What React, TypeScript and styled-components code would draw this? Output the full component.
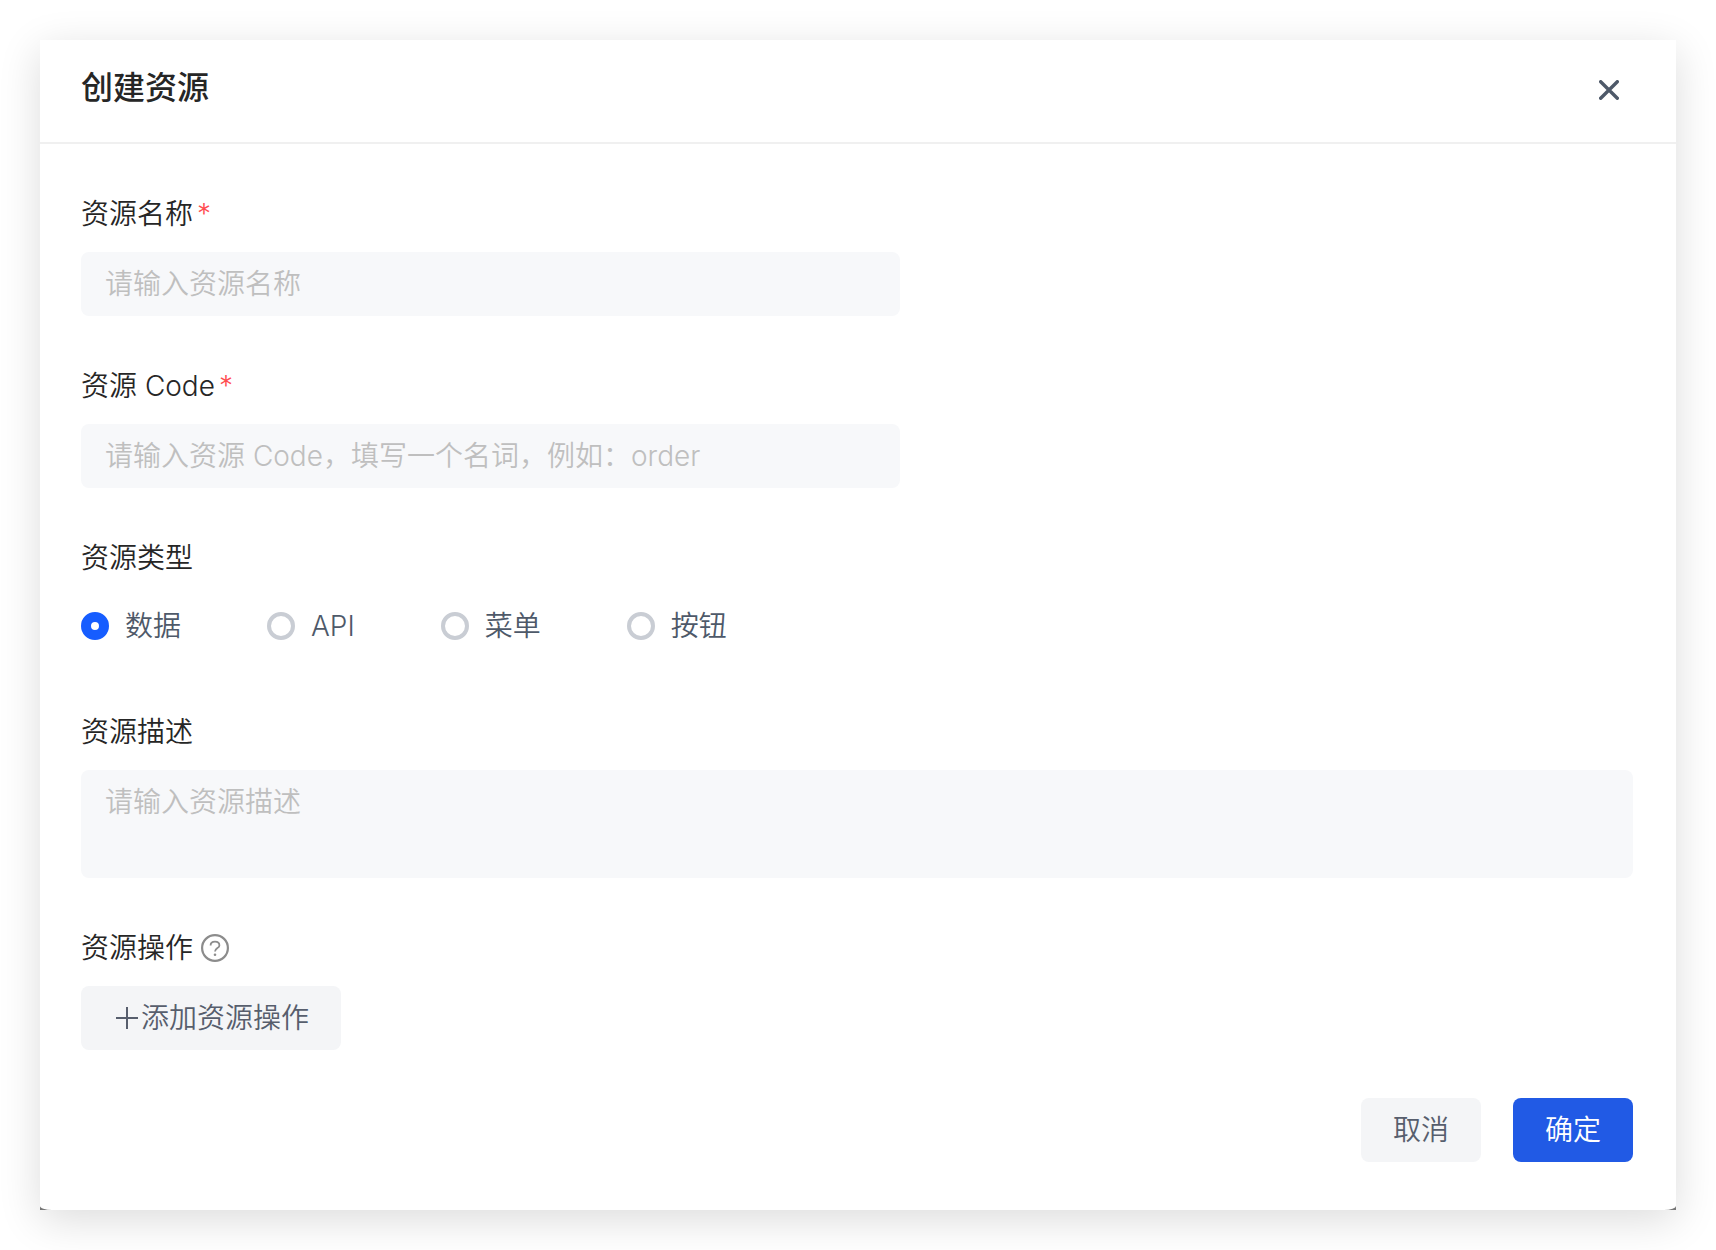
import React, { useState } from "react";
import styled, { createGlobalStyle } from "styled-components";

const GlobalStyle = createGlobalStyle`
  * { box-sizing: border-box; }
  body {
    margin: 0;
    background: #fff;
    font-family: Inter, "Noto Sans CJK SC", sans-serif;
    font-size: 28px;
    font-weight: 350;
    line-height: 40px;
    color: #262626;
  }
  button, input, textarea { font: inherit; }
`;

const Page = styled.main`
  padding: 40px;
`;

const Backdrop = styled.div`
  background: #777;
  box-shadow: 0 10px 40px rgba(0, 0, 0, 0.14);
`;

const Dialog = styled.section`
  background: #fff;
  border-radius: 0 0 12px 12px / 0 0 4px 4px;
`;

const Header = styled.header`
  display: flex;
  align-items: center;
  justify-content: space-between;
  height: 104px;
  padding: 0 47px 6px 41px;
  border-bottom: 2px solid #f0f0f0;
`;

const Title = styled.h1`
  margin: 0;
  font-size: 32px;
  line-height: 48px;
  font-weight: 500;
`;

const CloseButton = styled.button`
  display: flex;
  align-items: center;
  justify-content: center;
  width: 40px;
  height: 40px;
  margin-top: 4px;
  padding: 0;
  border: 0;
  background: none;
  color: #4e5969;
  cursor: pointer;
`;

const Form = styled.form`
  padding: 50px 43px 48px 41px;
`;

const Fields = styled.div`
  display: flex;
  flex-direction: column;
  gap: 50px;
`;

const Field = styled.div`
  display: flex;
  flex-direction: column;
  align-items: flex-start;
  gap: 18px;
`;

const LabelRow = styled.div`
  display: flex;
  align-items: center;
  gap: 8px;
  height: 40px;
`;

const Label = styled.label`
  display: flex;
  gap: 4px;
`;

const Required = styled.span`
  color: #ff4d4f;
`;

const Input = styled.input`
  width: 819px;
  max-width: 100%;
  height: 64px;
  padding: 0 24px;
  border: 0;
  border-radius: 8px;
  background: #f7f8fa;
  color: #262626;
  &::placeholder { color: #bfbfbf; opacity: 1; }
`;

const TextArea = styled.textarea`
  display: block;
  width: 100%;
  height: 108px;
  padding: 12px 24px;
  border: 0;
  border-radius: 8px;
  background: #f7f8fa;
  color: #262626;
  resize: none;
  &::placeholder { color: #bfbfbf; opacity: 1; }
`;

const RadioField = styled.fieldset`
  min-width: 0;
  margin: 0;
  padding: 0 0 6px;
  border: 0;
`;

const Legend = styled.legend`
  padding: 0;
  margin-bottom: 18px;
`;

const RadioRow = styled.div`
  display: flex;
  flex-wrap: wrap;
  column-gap: 86px;
`;

const RadioLabel = styled.label`
  display: flex;
  align-items: center;
  gap: 16px;
  height: 60px;
  color: #4e5969;
  cursor: pointer;
`;

const Radio = styled.input`
  appearance: none;
  width: 28px;
  height: 28px;
  margin: 0;
  border: 4px solid #c9cdd4;
  border-radius: 50%;
  background: #fff;
  &:checked { border: 10px solid #165dff; }
`;

const HelpButton = styled.button`
  display: flex;
  padding: 0;
  border: 0;
  background: none;
  color: #8c8c8c;
  cursor: help;
`;

const Button = styled.button<{ $primary?: boolean }>`
  display: flex;
  align-items: center;
  justify-content: center;
  gap: 2px;
  height: 64px;
  padding: 0 32px;
  border: 0;
  border-radius: 8px;
  background: ${(p) => (p.$primary ? "#215ae5" : "#f4f5f7")};
  color: ${(p) => (p.$primary ? "#fff" : "#575e6d")};
  cursor: pointer;
`;

const Footer = styled.footer`
  display: flex;
  justify-content: flex-end;
  gap: 32px;
  padding-top: 48px;
`;

const TYPES = ["数据", "API", "菜单", "按钮"];

export default function App() {
  const [type, setType] = useState(TYPES[0]);
  return (
    <Page>
      <GlobalStyle />
      <Backdrop>
        <Dialog role="dialog" aria-labelledby="dialog-title">
          <Header>
            <Title id="dialog-title">创建资源</Title>
            <CloseButton type="button" aria-label="关闭">
              <svg width="20" height="20" viewBox="0 0 20 20" fill="none" stroke="currentColor" strokeWidth="3.4" strokeLinecap="round">
                <path d="M1.7 1.7L18.3 18.3M18.3 1.7L1.7 18.3" />
              </svg>
            </CloseButton>
          </Header>
          <Form onSubmit={(e) => e.preventDefault()}>
            <Fields>
              <Field>
                <LabelRow>
                  <Label htmlFor="name">资源名称<Required>*</Required></Label>
                </LabelRow>
                <Input id="name" placeholder="请输入资源名称" />
              </Field>
              <Field>
                <LabelRow>
                  <Label htmlFor="code">资源 Code<Required>*</Required></Label>
                </LabelRow>
                <Input id="code" placeholder="请输入资源 Code，填写一个名词，例如：order" />
              </Field>
              <RadioField>
                <Legend>资源类型</Legend>
                <RadioRow>
                  {TYPES.map((t) => (
                    <RadioLabel key={t}>
                      <Radio type="radio" name="type" checked={type === t} onChange={() => setType(t)} />
                      {t}
                    </RadioLabel>
                  ))}
                </RadioRow>
              </RadioField>
              <Field>
                <LabelRow>
                  <Label htmlFor="description">资源描述</Label>
                </LabelRow>
                <TextArea id="description" placeholder="请输入资源描述" />
              </Field>
              <Field>
                <LabelRow>
                  资源操作
                  <HelpButton type="button" aria-label="帮助">
                    <svg width="28" height="28" viewBox="0 0 28 28" fill="none" stroke="currentColor" strokeWidth="2">
                      <circle cx="14" cy="14" r="12.9" strokeWidth="2.2" />
                      <path d="M9.6 11.4C9.6 9 11.5 7.7 14 7.7S18.4 9.2 18.4 11.4C18.4 14.2 14 14 14 17.6" strokeWidth="1.8" />
                      <circle cx="14" cy="20.8" r="1.3" fill="currentColor" stroke="none" />
                    </svg>
                  </HelpButton>
                </LabelRow>
                <Button type="button">
                  <svg width="26" height="26" viewBox="0 0 26 26" fill="none" stroke="currentColor" strokeWidth="2">
                    <path d="M3 13H25M14 2V24" />
                  </svg>
                  添加资源操作
                </Button>
              </Field>
            </Fields>
            <Footer>
              <Button type="button">取消</Button>
              <Button type="submit" $primary>确定</Button>
            </Footer>
          </Form>
        </Dialog>
      </Backdrop>
    </Page>
  );
}
